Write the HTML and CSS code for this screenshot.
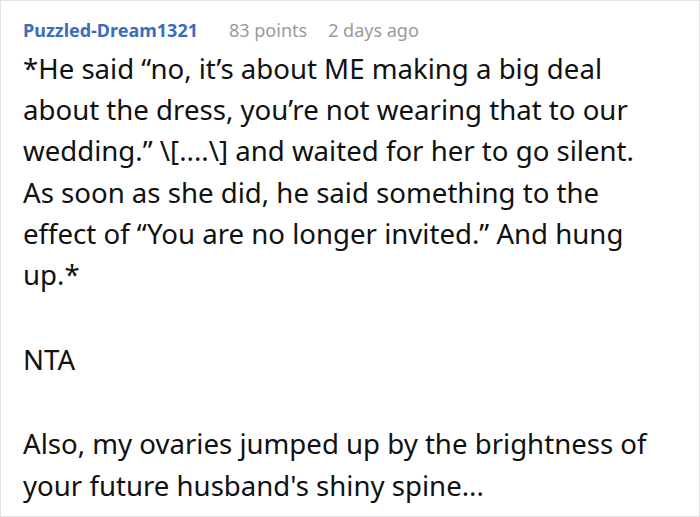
FILE: index.html
```html
<!DOCTYPE html>
<html>
<head>
<meta charset="utf-8">
<link rel="stylesheet" href="styles.css">
</head>
<body>
<div class="card">
  <div class="meta">
    <span class="user">Puzzled-Dream1321</span>
    <span class="points">83 points</span>
    <span class="time">2 days ago</span>
  </div>
  <div class="body">
    <p>*He said “no, it’s about ME making a big deal about the dress, you’re not wearing that to our wedding.” \[....\] and waited for her to go silent. As soon as she did, he said something to the effect of “You are no longer invited.” And hung up.*</p>
    <p>NTA</p>
    <p>Also, my ovaries jumped up by the brightness of your future husband's shiny spine...</p>
  </div>
</div>
</body>
</html>
```
FILE: styles.css
```css
html, body {
  margin: 0;
  padding: 0;
  background: #ffffff;
}
.card {
  box-sizing: border-box;
  width: 700px;
  height: 517px;
  border: 1px solid #e2e2e2;
  padding: 15px 30px 0 22px;
  font-family: "Noto Sans", sans-serif;
  overflow: hidden;
}
.meta {
  display: flex;
  align-items: baseline;
  font-size: 18px;
  line-height: 28px;
  height: 28px;
}
.user {
  color: #3a6cbf;
  font-weight: bold;
  margin-right: 31px;
}
.points {
  color: #9a9a9a;
  margin-right: 21px;
}
.time {
  color: #9a9a9a;
}
.body {
  margin-top: 3.5px;
  font-size: 27.6px;
  line-height: 1.5;
  color: #111111;
}
.body p {
  margin: 0 0 43px 0;
}
```
